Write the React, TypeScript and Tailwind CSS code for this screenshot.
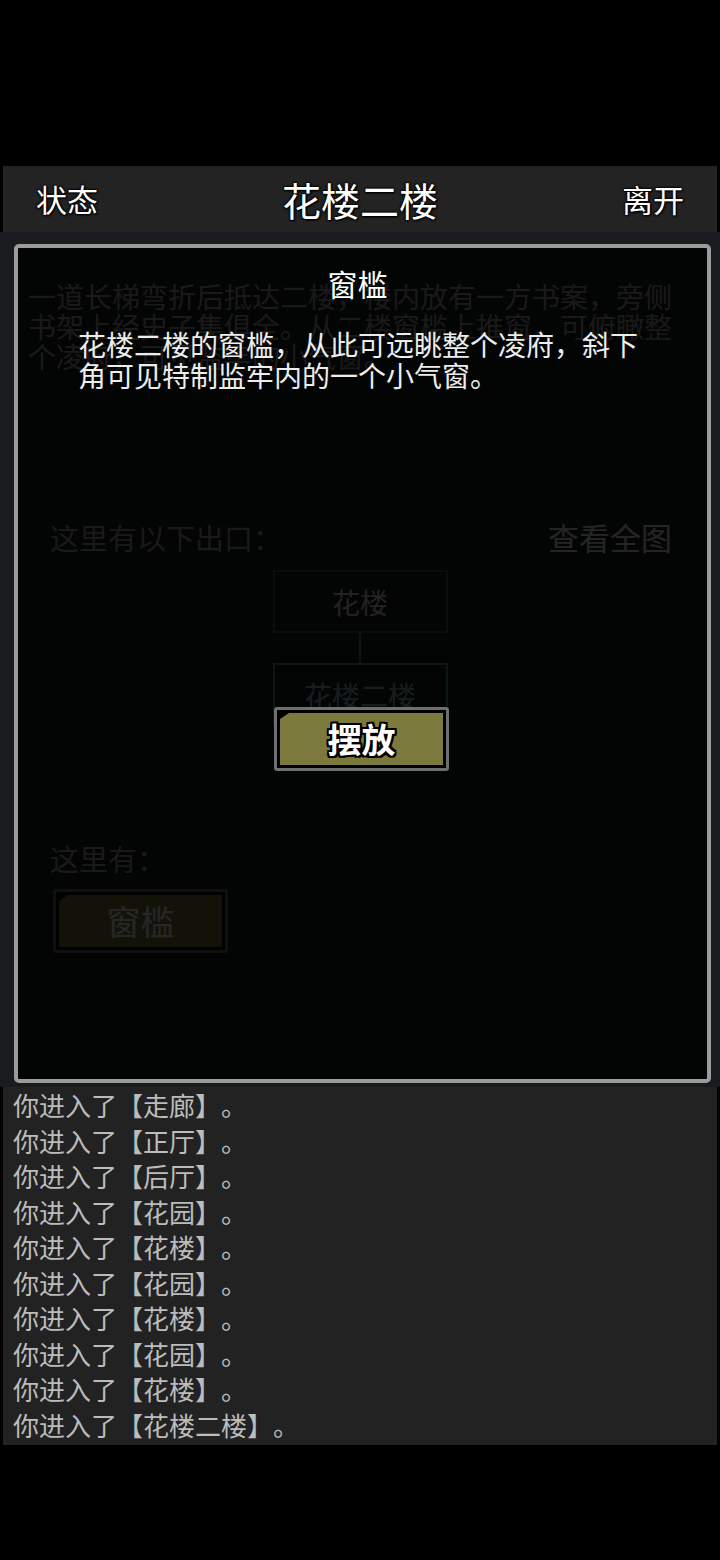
const logLines = ["走廊", "正厅", "后厅", "花园", "花楼", "花园", "花楼", "花园", "花楼", "花楼二楼"];

const outline =
  "[text-shadow:0_0_2px_#000,0_0_2px_#000,0_0_3px_#000,1px_1px_2px_#000]";
const heavyOutline =
  "[text-shadow:2px_0_0_#000,-2px_0_0_#000,0_2px_0_#000,0_-2px_0_#000,2px_2px_0_#000,-2px_-2px_0_#000,2px_-2px_0_#000,-2px_2px_0_#000]";

function ActionButton({
  label,
  bold = true,
  className = "",
}: {
  label: string;
  bold?: boolean;
  className?: string;
}) {
  return (
    <div
      className={`h-[64px] w-[175px] rounded-[3px] border-[3px] border-[#6f6f6f] bg-black p-[3px] ${className}`}
    >
      <div className="flex h-full w-full items-center justify-center bg-[#7b7a3c] [clip-path:polygon(9px_0,100%_0,100%_100%,0_100%,0_6px)]">
        <span
          className={`text-[34px] leading-none text-white ${bold ? `font-bold ${heavyOutline}` : "font-normal"}`}
        >
          {label}
        </span>
      </div>
    </div>
  );
}

function TreeNode({ label, tone }: { label: string; tone: "plain" | "current" }) {
  return (
    <div
      className={`flex h-[63px] w-[175px] items-center justify-center border-2 text-[28px] ${
        tone === "current"
          ? "border-[#4a9898] text-[#8cc8c8]"
          : "border-[#465656] text-[#e0e0e0]"
      }`}
    >
      {label}
    </div>
  );
}

export default function App() {
  return (
    <div className="h-[1560px] w-[720px] bg-black font-['Noto_Sans_CJK_SC','Noto_Sans',sans-serif] [text-spacing-trim:space-all]">
      <div className="h-[166px]" />

      <header className="mx-[3px] flex h-[66px] items-center justify-between bg-[#232323] px-[33px] text-white">
        <span className={`text-[31px] ${outline}`}>状态</span>
        <span className={`text-[39px] ${outline}`}>花楼二楼</span>
        <span className={`text-[31px] ${outline}`}>离开</span>
      </header>

      <main className="relative h-[855px] bg-[#1a1b1e]">
        {/* room page underneath the popup */}
        <div className="px-[28px] pt-[49px]">
          <p className="text-[28px] leading-[30px] text-[#a8a8a8]">
            一道长梯弯折后抵达二楼，楼内放有一方书案，旁侧书架上经史子集俱全。从二楼窗槛上推窗，可俯瞰整个凌府，可见监牢的小气窗。
          </p>

          <div className="mt-[148px] flex items-center justify-between pl-[22px] pr-[20px] leading-[36px]">
            <span className="text-[29px] text-[#a8a8a8]">这里有以下出口：</span>
            <span className="text-[31px] text-[#f0f0f0]">查看全图</span>
          </div>

          <div className="mt-[15px] flex flex-col items-center">
            <TreeNode label="花楼" tone="plain" />
            <div className="h-[30px] w-[2px] bg-[#4a9898]" />
            <TreeNode label="花楼二楼" tone="current" />
          </div>

          <p className="mt-[114px] pl-[22px] text-[29px] leading-[36px] text-[#a8a8a8]">这里有：</p>
          <ActionButton label="窗槛" bold={false} className="ml-[25px] mt-[13px]" />
        </div>

        {/* item popup */}
        <div className="absolute left-[14px] top-[12px] flex h-[839px] w-[697px] flex-col items-center rounded-[5px] border-4 border-[#9b9b9b] bg-black/85 pt-[17px]">
          <h2 className="mr-[10px] text-[30px] leading-[36px] text-white">窗槛</h2>
          <p className="ml-[60px] mt-[28px] w-[566px] self-start text-[28px] leading-[31px] text-[#ededed]">
            花楼二楼的窗槛，从此可远眺整个凌府，斜下角可见特制监牢内的一个小气窗。
          </p>
          <ActionButton label="摆放" className="mt-[316px] -translate-x-[1px]" />
        </div>
      </main>

      <section className="mx-[3px] h-[358px] bg-[#222222] pl-[10px]">
        {logLines.map((place, i) => (
          <p key={i} className="text-[26px] leading-[35.5px] text-[#bcbcbc]">
            你进入了【{place}】。
          </p>
        ))}
      </section>
    </div>
  );
}
